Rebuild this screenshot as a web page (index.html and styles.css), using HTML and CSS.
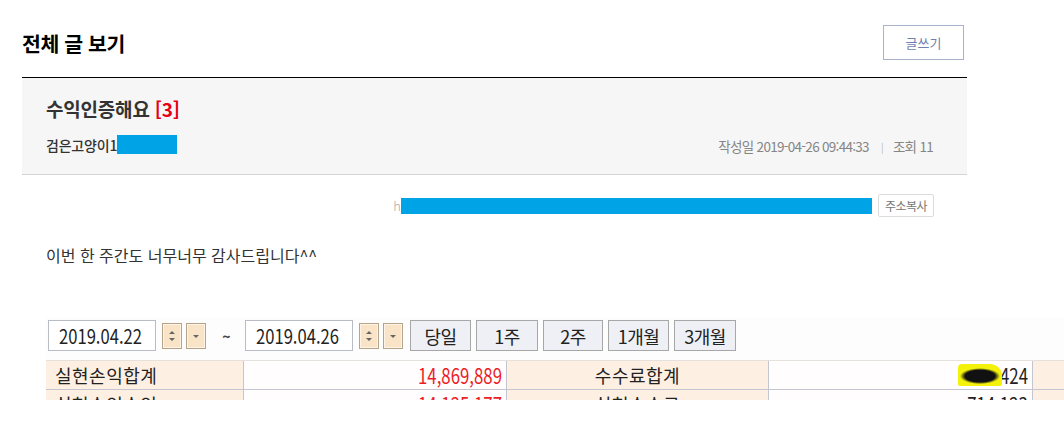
FILE: index.html
```html
<!DOCTYPE html>
<html lang="ko">
<head>
<meta charset="utf-8">
<link rel="stylesheet" href="styles.css">
</head>
<body>
<div class="page">
  <div class="board-head">
    <h2 class="board-title">전체 글 보기</h2>
    <a class="write-btn">글쓰기</a>
  </div>
  <div class="post-head">
    <div class="post-title">수익인증해요 <span class="cmt">[3]</span></div>
    <div class="post-info">
      <div class="author">검은고양이1<span class="mask mask-author"></span></div>
      <div class="meta">작성일 2019-04-26 09:44:33<span class="sep">|</span>조회 11</div>
    </div>
  </div>
  <div class="url-row">
    <span class="url-h">h</span><span class="mask mask-url"></span>
    <button class="copy-btn">주소복사</button>
  </div>
  <p class="post-text">이번 한 주간도 너무너무 감사드립니다^^</p>
  <div class="capture">
    <div class="toolbar">
      <div class="date"><span class="nt">2019.04.22</span></div>
      <span class="spin"><svg width="10" height="16" viewBox="0 0 10 16"><path d="M2 6 L5 3 L8 6Z M2 10 L5 13 L8 10Z" fill="#666"/></svg></span>
      <span class="drop"><svg width="8" height="6" viewBox="0 0 8 6"><path d="M1 2 L4 5 L7 2Z" fill="#666"/></svg></span>
      <span class="tilde">~</span>
      <div class="date"><span class="nt">2019.04.26</span></div>
      <span class="spin"><svg width="10" height="16" viewBox="0 0 10 16"><path d="M2 6 L5 3 L8 6Z M2 10 L5 13 L8 10Z" fill="#666"/></svg></span>
      <span class="drop"><svg width="8" height="6" viewBox="0 0 8 6"><path d="M1 2 L4 5 L7 2Z" fill="#666"/></svg></span>
      <span class="pbtn first w61">당일</span>
      <span class="pbtn w62">1주</span>
      <span class="pbtn w60">2주</span>
      <span class="pbtn w61">1개월</span>
      <span class="pbtn w62">3개월</span>
    </div>
    <div class="grid">
      <div class="c lab">실현손익합계</div>
      <div class="c num red"><span class="nt">14,869,889</span></div>
      <div class="c lab center">수수료합계</div>
      <div class="c num"><span class="scribble"></span><span class="nt">424</span></div>
      <div class="c lab"></div>
      <div class="c lab">실현손익수익</div>
      <div class="c num red"><span class="nt">14,125,177</span></div>
      <div class="c lab center">실현손수료</div>
      <div class="c num"><span class="nt">714,123</span></div>
      <div class="c lab"></div>
    </div>
  </div>
</div>
</body>
</html>
```

FILE: styles.css
```css
html, body {
  margin: 0;
  padding: 0;
  background: #fff;
  overflow: hidden;
}
body {
  font-family: "Noto Sans CJK KR", "Noto Sans", sans-serif;
  color: #333;
}
.page {
  width: 945px;
  margin-left: 22px;
}
.board-head {
  height: 69px;
  padding-top: 8px;
  display: flex;
  align-items: center;
  justify-content: space-between;
  border-bottom: 1px solid #000;
}
.board-title {
  margin: 0;
  font-size: 20.5px;
  font-weight: 700;
  color: #000;
  letter-spacing: -0.4px;
}
.write-btn {
  width: 79px;
  height: 33px;
  margin-right: 3px;
  border: 1px solid #a7b2cd;
  display: flex;
  align-items: center;
  justify-content: center;
  font-size: 13px;
  color: #6e7fb0;
}
.post-head {
  height: 97px;
  box-sizing: border-box;
  background: #f6f6f6;
  border-bottom: 1px solid #d4d4d4;
  padding: 17px 34px 0 24px;
}
.post-title {
  font-size: 19px;
  font-weight: 700;
  line-height: 28px;
  color: #333;
  letter-spacing: -0.2px;
}
.cmt { color: #e60012; }
.post-info {
  margin-top: 12px;
  display: flex;
  align-items: center;
  justify-content: space-between;
  height: 19px;
}
.author {
  font-size: 14px;
  font-weight: 500;
  color: #333;
  display: flex;
  align-items: center;
  letter-spacing: -0.2px;
}
.mask {
  display: inline-block;
  background: #00a3e6;
}
.mask-author {
  width: 60px;
  height: 19px;
}
.meta {
  font-size: 13.5px;
  color: #858585;
  letter-spacing: -0.7px;
  margin-top: 2px;
}
.sep {
  color: #bbb;
  font-size: 10px;
  margin: 0 10px 0 12px;
  position: relative;
  top: -1px;
}
.url-row {
  margin-top: 19px;
  padding-right: 33px;
  display: flex;
  align-items: center;
  justify-content: flex-end;
  height: 23px;
}
.url-h {
  font-size: 13px;
  color: #aaa;
  font-weight: 300;
}
.mask-url {
  width: 471px;
  height: 16px;
}
.copy-btn {
  margin-left: 6px;
  height: 23px;
  width: 56px;
  padding: 0;
  background: #fff;
  border: 1px solid #dcdcdc;
  border-radius: 2px;
  font-family: "Noto Sans CJK KR", sans-serif;
  font-size: 12px;
  color: #777;
  letter-spacing: -0.5px;
}
.post-text {
  margin: 25px 0 0 24px;
  font-size: 16px;
  line-height: 26px;
  color: #333;
  letter-spacing: 0;
}
.capture {
  margin: 49px 0 0 24px;
  width: 1040px;
  height: 80px;
  overflow: hidden;
  background: #fefdfd;
  padding-top: 3px;
  font-family: "Noto Sans CJK KR", sans-serif;
}
.toolbar {
  display: flex;
  align-items: center;
  height: 31px;
  padding-left: 2px;
}
.nt {
  display: inline-block;
  transform: scaleX(0.8);
  letter-spacing: 0;
}
.date {
  width: 106px;
  height: 29px;
  border: 1px solid #b8bcc6;
  background: #fff;
  font-size: 20px;
  line-height: 29px;
  color: #222;
  overflow: hidden;
}
.date .nt {
  transform: scaleX(0.83);
  transform-origin: left center;
  margin-left: 10px;
}
.spin, .drop {
  height: 24px;
  border: 1px solid #b4a48c;
  background: #f9e4c8;
  display: flex;
  align-items: center;
  justify-content: center;
  box-shadow: inset 0 0 0 1px #fff3e3;
}
.spin { width: 18px; margin-left: 6px; }
.drop { width: 18px; margin-left: 4px; }
.tilde {
  width: 37px;
  margin-left: 2px;
  text-align: center;
  font-size: 14px;
  font-weight: 700;
  color: #444;
}
.pbtn {
  border: 1px solid #a7a7a7;
  background: #eef0f5;
  box-sizing: border-box;
  height: 31px;
  display: flex;
  align-items: center;
  justify-content: center;
  font-size: 18px;
  color: #222;
  margin-left: 5px;
  letter-spacing: -0.5px;
}
.w61 { width: 61px; }
.w62 { width: 62px; }
.w60 { width: 60px; }
.pbtn.first { margin-left: 7px; }
.grid {
  margin-top: 9px;
  display: grid;
  grid-template-columns: 198px 263px 262px 264px 60px;
  grid-auto-rows: 29px;
  border-top: 1px solid #e6e1dc;
}
.c {
  border-right: 1px solid #c3c6d0;
  border-bottom: 1px solid #c3c6d0;
  font-size: 18px;
  line-height: 28px;
  color: #222;
  white-space: nowrap;
}
.lab {
  background: #fdf0e3;
  padding-left: 9px;
  letter-spacing: 0.5px;
}
.lab.center {
  text-align: center;
  padding-left: 0;
}
.num {
  background: #fffdfd;
  padding-right: 4px;
  font-size: 21px;
  display: flex;
  justify-content: flex-end;
  align-items: center;
}
.num .nt {
  transform-origin: right center;
}
.red { color: #ec1c24; }
.scribble {
  display: inline-block;
  width: 44px;
  height: 22px;
  margin-right: -9px;
  background: radial-gradient(ellipse 20px 8px at 50% 55%, #111 75%, transparent 100%), #f4f20a;
  border-radius: 4px 12px 2px 2px;
  position: relative;
  z-index: 1;
}
```
